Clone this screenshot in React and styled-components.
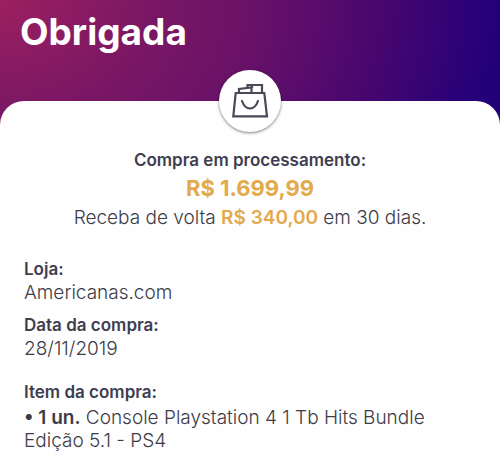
import React from "react";
import styled, { createGlobalStyle } from "styled-components";

const BagIcon = () => (
  <svg
    width="38"
    height="38"
    viewBox="0 0 38 38"
    fill="none"
    stroke="#4a4756"
    strokeWidth="2.2"
    aria-hidden="true"
  >
    <path d="M4.700 11H33.300L36 34.300H2.300Z" />
    <path d="M8 11V7L20.500 5.500V11" />
    <path d="M16.500 6V3H31V11M21 6V3" />
    <path d="M11 19C14.500 29 23.500 29 27 19" strokeLinecap="round" />
  </svg>
);

const App = () => {
  return (
    <Page>
      <GlobalStyle />
      <Header>
        <h1>Obrigada</h1>
      </Header>
      <Sheet>
        <Badge>
          <BagIcon />
        </Badge>
        <Summary>
          <Status>Compra em processamento:</Status>
          <Price>R$ 1.699,99</Price>
          <Cashback>
            Receba de volta <Amount>R$ 340,00</Amount> em 30 dias.
          </Cashback>
        </Summary>
        <Details>
          <Group>
            <dt>Loja:</dt>
            <dd>Americanas.com</dd>
          </Group>
          <Group>
            <dt>Data da compra:</dt>
            <dd>28/11/2019</dd>
          </Group>
          <Group $spaced>
            <dt>Item da compra:</dt>
            <dd>
              <strong>• 1 un.</strong> Console Playstation 4 1 Tb Hits Bundle
              Edição 5.1 - PS4
            </dd>
          </Group>
        </Details>
      </Sheet>
    </Page>
  );
};

const GlobalStyle = createGlobalStyle`
  * {
    box-sizing: border-box;
  }
  body {
    margin: 0;
    background: #fefefe;
    color: #3c3b47;
    font-family: Inter, "Liberation Sans", sans-serif;
  }
`;

const Page = styled.main`
  min-height: 100vh;
  display: flex;
  flex-direction: column;
  background: radial-gradient(
      ellipse 100% 380px at 0 0,
      #9c2060 0%,
      #7a1764 30%,
      #6a1268 50%,
      #4a076e 75%,
      #22007a 100%
    )
    top / 100% 130px no-repeat;
`;

const Header = styled.header`
  padding: 8px 20px 45px;

  h1 {
    margin: 0;
    color: #fff;
    font-size: 37px;
    line-height: 48px;
    font-weight: 700;
  }
`;

const Sheet = styled.section`
  position: relative;
  flex: 1;
  padding: 47px 24px 16px;
  background: #fefefe;
  border-radius: 24px 24px 0 0;
`;

const Badge = styled.div`
  position: absolute;
  top: -31px;
  left: 50%;
  transform: translateX(-50%);
  width: 62px;
  height: 62px;
  display: flex;
  align-items: center;
  justify-content: center;
  background: #fff;
  border-radius: 50%;
  box-shadow: 0 1px 3px rgba(0, 0, 0, 0.5);
`;

const Summary = styled.div`
  text-align: center;
`;

const Status = styled.p`
  margin: 0;
  color: #3f3e50;
  font-size: 17px;
  line-height: 24px;
  font-weight: 600;
`;

const Price = styled.p`
  margin: 0;
  color: #e2aa4b;
  font-size: 22px;
  line-height: 32px;
  font-weight: 700;
`;

const Cashback = styled.p`
  margin: 0;
  font-size: 19px;
  line-height: 28px;
  font-weight: 300;
`;

const Amount = styled.span`
  color: #e2aa4b;
  font-weight: 600;
`;

const Details = styled.dl`
  margin: 26px 0 0;
  padding-right: 40px;
`;

const Group = styled.div`
  display: grid;
  row-gap: ${({ $spaced }) => ($spaced ? "2px" : "0")};
  margin-top: ${({ $spaced }) => ($spaced ? "21px" : "10px")};
  font-size: 19px;
  line-height: 23px;
  font-weight: 300;

  dt {
    color: #3f3e50;
    font-size: 17px;
    font-weight: 600;
  }
  dd {
    margin: 0;
  }
  strong {
    font-weight: 600;
  }
`;

export default App;
